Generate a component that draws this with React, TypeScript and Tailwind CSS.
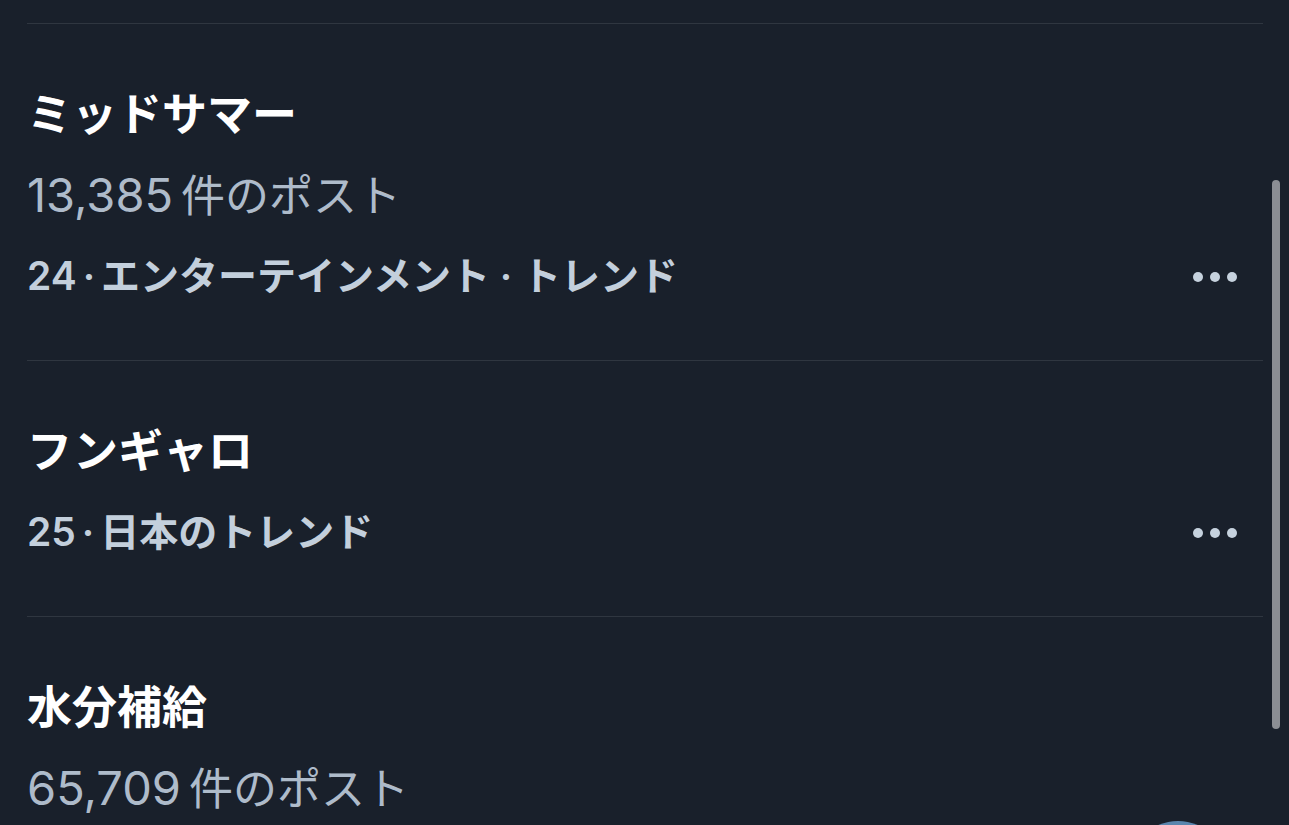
const trends = [
  { title: "ミッドサマー", posts: "13,385", rank: "24", category: "エンターテインメント · トレンド" },
  { title: "フンギャロ", posts: null, rank: "25", category: "日本のトレンド" },
  { title: "水分補給", posts: "65,709", rank: null, category: null },
];

const font = "font-['Inter','Noto_Sans_CJK_JP',sans-serif]";

export default function App() {
  return (
    <div className={`relative h-[825px] w-[1289px] overflow-hidden bg-[#19202b] ${font}`}>
      <div className="pt-[23px] pl-[27px] pr-[26px]">
        {trends.map((t) => (
          <TrendItem key={t.title} {...t} />
        ))}
      </div>

      {/* scrollbar */}
      <div className="absolute left-[1272px] top-[180px] h-[549px] w-[8px] rounded-full bg-[#8b8e94]" />

      {/* floating button peeking in at bottom */}
      <div className="absolute left-[1128px] top-[821px] h-[100px] w-[100px] rounded-full bg-[#5a86ae]" />
    </div>
  );
}

function TrendItem({
  title,
  posts,
  rank,
  category,
}: {
  title: string;
  posts: string | null;
  rank: string | null;
  category: string | null;
}) {
  return (
    <div className="border-t border-[#2f3640] pt-[51px] pb-[44px]">
      <div className="flex items-center">
        <div className="flex-1">
          <div className="text-[45px] leading-[80px] font-bold text-white">{title}</div>
          {posts && (
            <div className="text-[44px] leading-[80px] text-[#aebbca]">
              <span className="text-[47px]">{posts}</span>
              <span className="ml-[8px]">件のポスト</span>
            </div>
          )}
          {rank && (
            <div className="text-[39px] leading-[80px] font-semibold text-[#c3cfdc]">
              {rank}
              <span className="mx-[6px]">·</span>
              {category}
            </div>
          )}
        </div>
        {rank && (
          <div className="mr-[26px] flex gap-[7px] self-end pb-[34px]">
            <span className="h-[10px] w-[10px] rounded-full bg-[#c6d2de]" />
            <span className="h-[10px] w-[10px] rounded-full bg-[#c6d2de]" />
            <span className="h-[10px] w-[10px] rounded-full bg-[#c6d2de]" />
          </div>
        )}
      </div>
    </div>
  );
}
